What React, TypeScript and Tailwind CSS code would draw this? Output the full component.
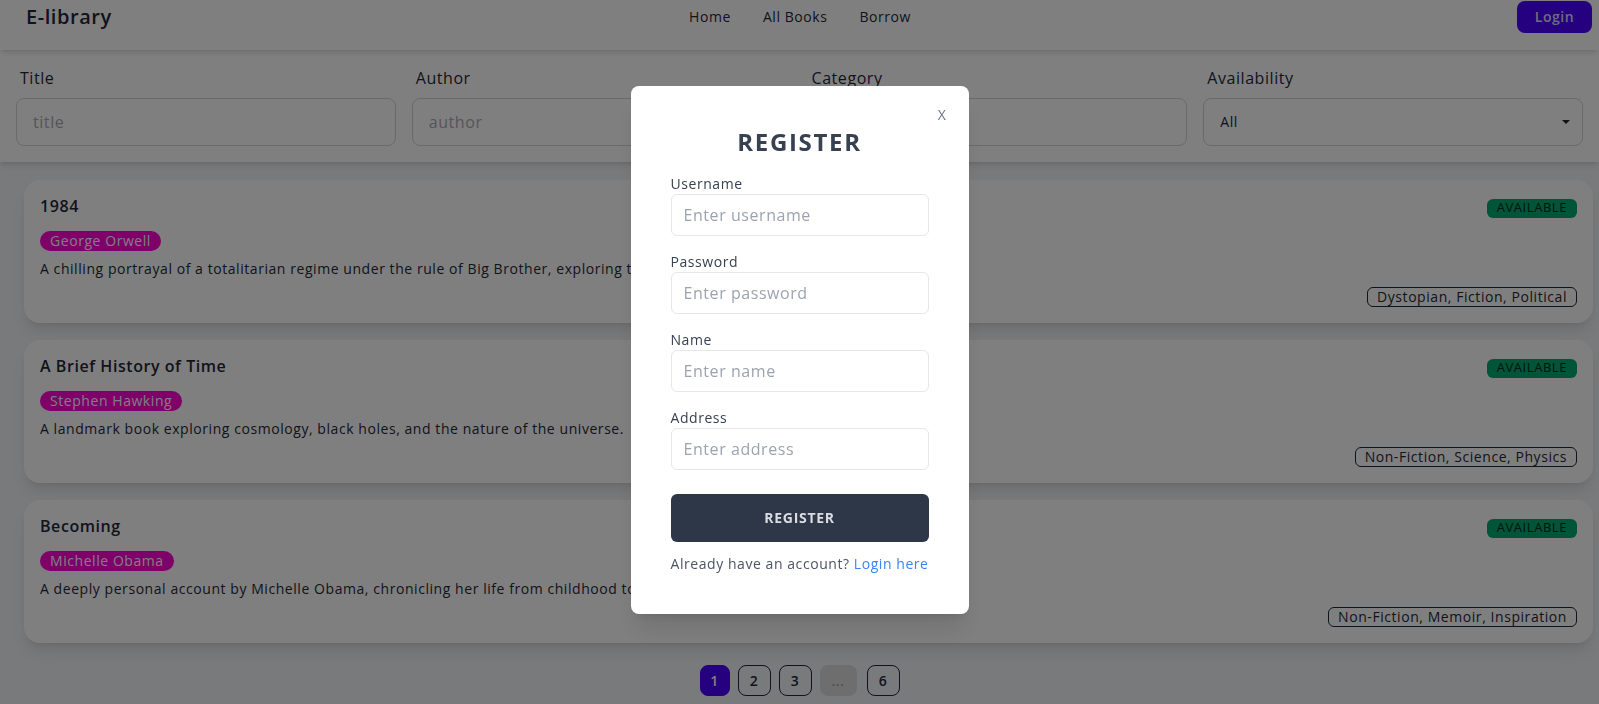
const books = [
  {
    title: "1984",
    author: "George Orwell",
    desc: "A chilling portrayal of a totalitarian regime under the rule of Big Brother, exploring themes of surveillance and control.",
    cats: "Dystopian, Fiction, Political",
  },
  {
    title: "A Brief History of Time",
    author: "Stephen Hawking",
    desc: "A landmark book exploring cosmology, black holes, and the nature of the universe.",
    cats: "Non-Fiction, Science, Physics",
  },
  {
    title: "Becoming",
    author: "Michelle Obama",
    desc: "A deeply personal account by Michelle Obama, chronicling her life from childhood to the White House.",
    cats: "Non-Fiction, Memoir, Inspiration",
  },
];

function Navbar() {
  return (
    <div className="relative z-10 h-[50px] bg-white shadow-md">
      <div className="flex h-[34px] items-center pr-[7px]">
        <div className="flex-1 pl-[26px] text-xl font-semibold text-[#1f2937]">E-library</div>
        <ul className="mr-[18px] flex items-center gap-8 text-sm text-[#1f2937]">
          <li>Home</li>
          <li>All Books</li>
          <li>Borrow</li>
        </ul>
        <div className="flex flex-1 justify-end">
          <button className="h-8 w-[75px] rounded-lg bg-[#4a00ff] text-sm font-semibold text-[#dcd9ff]">Login</button>
        </div>
      </div>
    </div>
  );
}

function Filters() {
  return (
    <div className="grid grid-cols-4 gap-4 bg-white px-4 pt-4 pb-4 shadow-md">
      {["Title", "Author", "Category"].map(l => (
        <div key={l}>
          <div className="mb-2 pl-1 text-base leading-6 text-[#1f2937]">{l}</div>
          <input
            placeholder={l.toLowerCase()}
            className="h-12 w-full rounded-lg border border-[#d2d4d7] px-4 text-base text-[#1f2937] placeholder:text-[#a8abb0] outline-none"
          />
        </div>
      ))}
      <div>
        <div className="mb-2 pl-1 text-base leading-6 text-[#1f2937]">Availability</div>
        <div className="flex h-12 w-full items-center justify-between rounded-lg border border-[#d2d4d7] pr-[12px] pl-4 text-sm text-[#1f2937]">
          <span>All</span>
          <svg width="8" height="4" viewBox="0 0 8 4"><path d="M0 0h8L4 4z" fill="#1f2937" /></svg>
        </div>
      </div>
    </div>
  );
}

function BookCard({ b }: { b: (typeof books)[number] }) {
  return (
    <div className="ml-6 mr-[6px] rounded-2xl bg-white px-4 pt-[14px] pb-4 shadow-lg">
      <div className="flex h-6 items-center justify-between">
        <div className="text-base font-semibold text-[#1f2937]">{b.title}</div>
        <span className="mt-1 flex h-[19px] items-center rounded-md bg-[#00a96e] px-[10px] text-[13px] text-[#00261a]">AVAILABLE</span>
      </div>
      <div className="mt-[13px] flex">
        <span className="flex h-5 items-center rounded-full bg-[#ff00d3] px-[10px] text-sm text-white">{b.author}</span>
      </div>
      <div className="mt-2 whitespace-nowrap text-sm leading-5 text-[#1f2937]">{b.desc}</div>
      <div className="mt-2 flex justify-end">
        <span className="flex h-5 items-center rounded-md border border-[#1f2937] px-[9px] text-sm text-[#1f2937]">{b.cats}</span>
      </div>
    </div>
  );
}

function Pagination() {
  const btn = "flex h-[31px] items-center justify-center rounded-lg border text-sm font-semibold";
  return (
    <div className="mt-[22px] flex justify-center gap-2">
      <span className={`${btn} w-[30px] border-[#4a00ff] bg-[#4a00ff] text-white`}>1</span>
      <span className={`${btn} w-[33px] border-[#1f2937] text-[#1f2937]`}>2</span>
      <span className={`${btn} w-[33px] border-[#1f2937] text-[#1f2937]`}>3</span>
      <span className={`${btn} mr-[2px] w-[37px] border-[#dcdcdc] bg-[#dcdcdc] text-[#9ca3af]`}>...</span>
      <span className={`${btn} w-[33px] border-[#1f2937] text-[#1f2937]`}>6</span>
    </div>
  );
}

function RegisterModal() {
  const fields = [
    ["Username", "Enter username"],
    ["Password", "Enter password"],
    ["Name", "Enter name"],
    ["Address", "Enter address"],
  ];
  return (
    <div className="fixed inset-0 z-50 flex items-center justify-center bg-black/50">
      <div className="relative mb-[5px] w-[338px] rounded-lg bg-white p-10 shadow-xl">
        <button className="absolute top-[19px] right-[22px] text-sm text-[#6b7280]">X</button>
        <h2 className="text-center text-2xl leading-8 font-bold tracking-[0.07em] text-[#374151]">REGISTER</h2>
        <div className="mt-4">
          {fields.map(([l, p]) => (
            <div key={l} className="mb-4">
              <div className="text-sm leading-5 font-medium text-[#374151]">{l}</div>
              <input
                placeholder={p}
                className="h-[42px] w-full rounded-md border border-[#e5e7eb] px-3 text-base tracking-[0.035em] text-[#374151] placeholder:text-[#9ca3af] outline-none"
              />
            </div>
          ))}
        </div>
        <button className="mt-2 h-12 w-full rounded-md bg-[#2d3748] text-sm font-bold tracking-[0.05em] text-[#d9dce1]">REGISTER</button>
        <p className="mt-3 text-center text-sm leading-5 whitespace-nowrap text-[#4b5563]">
          Already have an account? <span className="text-[#3b82f6]">Login here</span>
        </p>
      </div>
    </div>
  );
}

export default function App() {
  return (
    <div className="h-screen overflow-hidden bg-[#f3f4f6] tracking-[0.035em] [font-family:'Open_Sans',sans-serif]">
      <Navbar />
      <Filters />
      <div className="mt-[18px] flex flex-col gap-[17px]">
        {books.map(b => <BookCard key={b.title} b={b} />)}
      </div>
      <Pagination />
      <RegisterModal />
    </div>
  );
}
